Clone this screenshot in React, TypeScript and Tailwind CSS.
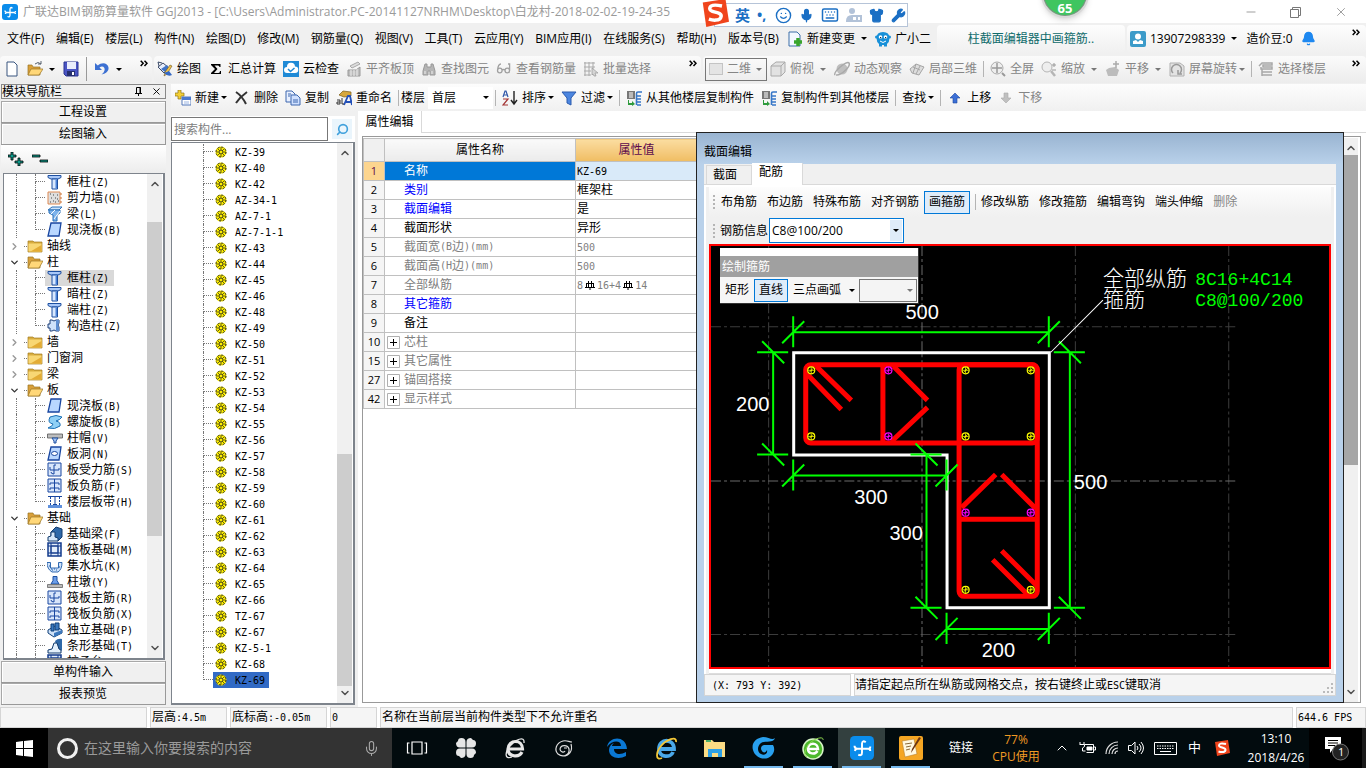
import React from 'react';
import { Smile, Mic, Keyboard, Shirt, Wrench, Bell, ChevronUp, ChevronDown, ChevronRight, Minus, X, Search } from 'lucide-react';

const dash = 'border-dotted border-[#777]';

const Caret = ({ className = 'text-black' }: { className?: string }) => (
  <svg width="6" height="3" viewBox="0 0 6 3" className={`shrink-0 ${className}`}>
    <path d="M0 0h6L3 3z" fill="currentColor" />
  </svg>
);

const Sep = () => <span className="-mx-px h-4 w-px shrink-0 bg-[#b4b4b4]" />;

const More = () => (
  <svg width="8" height="7" viewBox="0 0 8 7" fill="none" stroke="#000" strokeWidth="1.5">
    <path d="M.7.7 3.2 3.3.7 6M4.5.7 7 3.3 4.5 6" />
  </svg>
);

// Latin runs are set smaller so that they keep the half-width pitch of the CJK glyphs
const Mixed = ({ text }: { text: string }) => (
  <>
    {text.split(/([\x20-\x7e]+)/).map((part, i) =>
      /^[\x20-\x7e]+$/.test(part) ? (
        <span key={i} className="font-['DejaVu_Sans_Mono',monospace] text-[10px] whitespace-pre">{part}</span>
      ) : (
        <span key={i}>{part}</span>
      )
    )}
  </>
);

const shapes: Record<string, React.ReactNode> = {
  file: <path d="M3 1h7l3 3v11H3z" fill="#fff" stroke="#39557f" />,
  open: (
    <>
      <path d="M1 4h4l1 2h7v8H1z" fill="#d9a03a" stroke="#9a7424" strokeWidth=".7" />
      <path d="M4 8h12l-4 6H1z" fill="#ffd778" stroke="#9a7424" strokeWidth=".7" />
      <path d="M8 3q3-3 6 0m0-3v3h-3" fill="none" stroke="#5a6570" />
    </>
  ),
  openFolder: (
    <>
      <path d="M1 3h5l1 2h6v9H1z" fill="#d9a03a" stroke="#9a7424" strokeWidth=".7" />
      <path d="M4 7h12l-4 7H1z" fill="#ffd778" stroke="#9a7424" strokeWidth=".7" />
    </>
  ),
  save: (
    <>
      <path d="M1 1h14v14H3l-2-2z" fill="#4a55c4" stroke="#2b3592" />
      <path d="M4 1h9v7H4z" fill="#e9edfb" />
      <path d="M4 10h8v5H4z" fill="#26306f" />
      <path d="M9 11h2v3H9z" fill="#fff" />
    </>
  ),
  undo: <path d="M1 2v7h7L5.500 6.500c3-2.500 6 0 5 3-.5 2-2 3-3 4 5-1 7.500-4 7-7C14 2 8 .5 3.800 4.500z" fill="#3c70d2" />,
  draw: (
    <>
      <path d="m1 6 5-4 6 5-5 5z" fill="#e8eefc" stroke="#3b4a68" />
      <path d="M2 5 1 1l4 1" fill="none" stroke="#3b4a68" />
      <path d="m4 8 6-4 3 4-5 3z" fill="#3f73c8" />
      <path d="m15 5-5 8-3 2 1-4 5-7z" fill="#f0c24a" stroke="#6b5526" strokeWidth=".6" />
      <path d="M7 12q4 4 8 2l-3-4z" fill="#3569c4" />
    </>
  ),
  sigma: <path d="M3 3h9.500v3h-1Q11.300 4.500 10 4.500H6.500L9.500 8 6 12h4.500q1.500 0 1.500-2h1v3H3v-1l4-4-4-4z" fill="#000" />,
  cloud: (
    <>
      <path d="M0 0h16v16H0z" fill="#1f8ad6" />
      <path d="M4 12a3 3 0 0 1 0-6 4 4 0 0 1 8-.5 3.200 3.200 0 0 1 0 6.500z" fill="#fff" />
      <path d="m5 8 2.500 2.500L11.500 7" fill="none" stroke="#1f8ad6" strokeWidth="1.500" />
    </>
  ),
  level: (
    <>
      <path d="M2 9h8l4-3v9H2z" fill="#bdbdbd" stroke="#999" />
      <path d="m4 5 8-4 2 2-8 4z" fill="#ddd" stroke="#a8a8a8" />
      <path d="M5 9v6M8 9v6M11 8v7" stroke="#eee" />
    </>
  ),
  binoc: (
    <>
      <path d="M4 3h2v3h4V3h2l2 7v4H9v-4H7v4H2v-4z" fill="#b5b5b5" stroke="#999" />
      <path d="M4 10v3m7-3v3" stroke="#eee" />
    </>
  ),
  glasses: <path d="M5 3Q2 3 1.500 9.500a2.300 2.300 0 1 0 4.600 0 2.300 2.300 0 0 0-4.600 0M6 9q1.500-1 3 0m0 .5a2.300 2.300 0 1 0 4.600 0 2.300 2.300 0 0 0-4.600 0m4.600 0V3H12" fill="none" stroke="#a0a0a0" strokeWidth="1.300" />,
  batch: (
    <>
      <path d="M1 2h11M1 6h11M1 10h7M1 14h7M2 1v14M6 1v14M10 1v8" stroke="#aaa" fill="none" />
      <path d="m9 7 6 5-3 0 1 3-2 0-1-2-1 1z" fill="#d5d5d5" stroke="#999" strokeWidth=".7" />
    </>
  ),
  cube: (
    <>
      <path d="m1 5 5-4h9v10l-4 4H1z" fill="#e2e2e2" stroke="#aaa" />
      <path d="M1 5h10v10M11 5l4-4" fill="none" stroke="#aaa" />
    </>
  ),
  planet: (
    <>
      <circle cx="8" cy="8" r="5.500" fill="#bfbfbf" />
      <path d="M1 14C-1 11 13-1 15 2s-8 13-13 12" fill="none" stroke="#a9a9a9" strokeWidth="1.500" />
    </>
  ),
  local: (
    <>
      <path d="m1 8 6-5 8 3-5 8-7-2z" fill="#ddd" stroke="#a5a5a5" />
      <path d="m4 6 7 3M7 3l-3 9M11 5l-4 8" stroke="#a5a5a5" fill="none" />
    </>
  ),
  full: (
    <>
      <circle cx="7" cy="7" r="6" fill="#eee" stroke="#aaa" />
      <path d="M7 2v10M2 7h10" stroke="#999" strokeWidth="1.500" />
      <path d="m12 12 3 3" stroke="#999" strokeWidth="2" />
    </>
  ),
  zoom: (
    <>
      <circle cx="6" cy="6" r="5" fill="#eee" stroke="#b5b5b5" />
      <path d="m10 10 4 5" stroke="#b5b5b5" strokeWidth="2.500" />
      <path d="M13 2v4M11 4h4M11 9h4" stroke="#999" />
    </>
  ),
  pan: (
    <>
      <path d="M3 15 1 9l3-2 6-1 4 3-2 6z" fill="#bcbcbc" />
      <path d="M11 0v7M8 3h6" stroke="#aaa" strokeWidth="1.500" />
    </>
  ),
  rotate: (
    <>
      <path d="M1 2h10l4 3v10H1z" fill="#e3e3e3" stroke="#b0b0b0" />
      <path d="M4 12a5 5 0 1 1 7 0M9 9v4h4" fill="none" stroke="#999" strokeWidth="1.500" />
    </>
  ),
  floors: <path d="m1 5 3-3h10v2H5v2h9v2H3V6M4 11h10M4 14h10M4 8v7" fill="none" stroke="#a8a8a8" strokeWidth="1.500" />,
  add: (
    <>
      <path d="M3 0h3v3h3v3H6v3H3V6H0V3h3z" fill="#f3cf36" stroke="#8d7418" strokeWidth=".7" />
      <path d="M7 7h9v8H7z" fill="#fff" stroke="#5578b8" />
      <path d="M7 7h9v3H7z" fill="#4a79cf" />
      <path d="M9 12h5M9 14h5" stroke="#9db6e2" />
    </>
  ),
  del: <path d="M2 2q6 4 10 12M13 2Q6 7 2 13" stroke="#333" strokeWidth="2" fill="none" />,
  copy: (
    <>
      <path d="M1 1h6l3 3v8H1z" fill="#e8f0ff" stroke="#3d66ae" />
      <path d="M6 5h6l3 3v7H6z" fill="#cfe0ff" stroke="#3d66ae" />
      <path d="M8 10h5M8 12h5M3 4h3M3 6h2" stroke="#3d66ae" />
    </>
  ),
  rename: (
    <>
      <path d="m3 5 4-4 8 1v4l-7 1z" fill="#d6a73c" stroke="#775a17" strokeWidth=".7" />
      <path d="m8 15 4-9h2l2 9m-6-3h5" fill="none" stroke="#2350b8" strokeWidth="1.800" />
      <path d="M1 10h3v4H1v-2h3M6 8v6h2" fill="none" stroke="#333" />
    </>
  ),
  sort: (
    <>
      <path d="m1 7 2-6h1l2 6M2 5h3" fill="none" stroke="#2d55a8" strokeWidth="1.200" />
      <path d="M1 9h5l-5 6h5" fill="none" stroke="#a33535" strokeWidth="1.200" />
      <path d="M12 1v12m-3-3 3 4 3-4" fill="none" stroke="#222" strokeWidth="1.400" />
    </>
  ),
  filter: <path d="M1 2h14l-5 6v7l-4-2V8z" fill="#4c86e0" stroke="#2b5bad" />,
  floorCopy: (
    <>
      <path d="M1 1h8v8H1z" fill="#777" />
      <path d="M3 3h4M3 5h4M3 7h4" stroke="#fff" />
      <path d="M16 2h-4q-1.500 0-1.500 1.500V15M11 6h4M11 9h4M11 12h4M11 15h4" stroke="#3777c8" fill="none" strokeWidth="1.600" />
      <path d="M3 10v3h3v-2l3 3-3 2v-1H2v-5z" fill="#2d9a3c" />
    </>
  ),
  up: <path d="m8 3 5 5h-3v5H6V8H3z" fill="#3c6fd6" stroke="#1d46a0" strokeWidth=".6" />,
  down: <path d="m8 13 5-5h-3V3H6v5H3z" fill="#c0c0c0" stroke="#aaa" strokeWidth=".6" />,
  note: (
    <>
      <path d="M2 1h8l3 3v11H2z" fill="#f3f8ff" stroke="#3d6fa8" />
      <path d="M11 7v8M7 11h8" stroke="#39a52c" strokeWidth="3.500" />
    </>
  ),
  robot: (
    <>
      <path d="M8 1q6.500 0 6.500 6 0 4-2.500 6v2.500H9V14H7v1.500H4V13q-2.500-2-2.500-6 0-6 6.500-6" fill="#1890d8" />
      <circle cx="1.500" cy="6" r="1.500" fill="#1890d8" />
      <circle cx="14.500" cy="6" r="1.500" fill="#1890d8" />
      <circle cx="5.500" cy="6" r="1.800" fill="#fff" />
      <circle cx="10.500" cy="6" r="1.800" fill="#fff" />
      <path d="M5 6h1.200v1.200H5zM10 6h1.200v1.200H10z" fill="#1a2c40" />
      <path d="M5 10q3 3 6 0" stroke="#fff" fill="none" />
    </>
  ),
  user: (
    <>
      <rect width="16" height="16" rx="2" fill="#3c9bc9" />
      <circle cx="8" cy="5.500" r="3" fill="#fff" />
      <path d="M3 13V10l3-1 2 2 2-2 3 1v3z" fill="#fff" />
    </>
  ),
  logo: (
    <>
      <rect width="16" height="16" rx="3" fill="#0a8ceb" />
      <path d="M10.500 4.200Q8.300 2.500 8 5v6q0 2.500-2.500 1.500M3 6.500q0 2 2 2h7.500q1 0 1-1.500M3.300 10q.2-1.500 1.700-1.500M12 8.500q1.500 0 1.500 1.500" fill="none" stroke="#fff" strokeWidth="1.300" />
    </>
  ),
  folder: (
    <>
      <path d="M1 3h5l1 1h8v10H1z" fill="#d8ad3f" stroke="#a37d21" strokeWidth=".7" />
      <path d="M1.500 5.500h13v8h-13z" fill="#f8d774" />
      <path d="M14.500 7v6.500h-11z" fill="#e3ac35" />
    </>
  ),
  column: (
    <>
      <path d="M1 1.500h13v2L11 5H4L1 3.500z" fill="#a9c8f8" stroke="#1d4fa0" />
      <path d="M5 5h5.500v10H5z" fill="#d8e8ff" stroke="#1d4fa0" />
      <path d="M8.500 5.500H10v9H8.500z" fill="#4a82d8" />
    </>
  ),
  wall: (
    <>
      <path d="M1 2h12v12H1z" fill="#dedede" stroke="#dd8a55" />
      <path d="M3 4h1M6 5h1M4 8h1M8 8h1M10 5h1M6 11h1M11 11h1M3 12h1M10 9h1M8 12h1" stroke="#444" />
      <path d="M13 4h2M13 8h2M13 12h2" stroke="#c9712f" />
    </>
  ),
  beam: (
    <>
      <path d="m1 4 4-3h10l-3 3z" fill="#cce2fb" stroke="#2b71b8" />
      <path d="M2 4h11v3l-3 2v6H6V9L2 7z" fill="#7db3ec" stroke="#2b71b8" />
      <path d="m4 8 4-4m-1 9 6-8" stroke="#fff" />
    </>
  ),
  slab: <path d="M4 1h10l-2 13H1z" fill="#b9d7ff" stroke="#1846a0" strokeWidth="1.300" />,
  spiral: <path d="M3 3q6-3 12 0-2 3-6 4 5 1 4 5-5 4-12 2 5-2 5-4-6-1-3-7" fill="#8fd0f6" stroke="#1a6fb5" />,
  cap: (
    <>
      <path d="M.5 4h15v4H.5z" fill="#bdbdbd" stroke="#555" strokeWidth=".8" />
      <path d="M5 8h6l-2 3v2H7v-2z" fill="#a6c6f6" stroke="#1d4fa0" />
    </>
  ),
  hole: (
    <>
      <path d="M4 1h10l-2 13H1z" fill="#b9d7ff" stroke="#1846a0" strokeWidth="1.300" />
      <ellipse cx="7.500" cy="7.500" rx="3" ry="2" fill="#fff" stroke="#1846a0" />
    </>
  ),
  rebar: (
    <>
      <path d="M1 1h13v13H1z" fill="#d8e6fb" stroke="#1846a0" />
      <path d="M3 5v3h9V6M9 3H7v9q-3 0-3-2" fill="none" stroke="#1846a0" />
    </>
  ),
  rebar2: (
    <>
      <path d="M1 1h13v13H1z" fill="#d8e6fb" stroke="#1846a0" />
      <path d="M7.500 1v13M3 7V5h9v2M3 12v-2h9v2" fill="none" stroke="#1846a0" />
    </>
  ),
  strip: (
    <>
      <path d="M1 2.500h14" stroke="#1846a0" />
      <path d="M1 11h14v3H1z" fill="#5f90dc" />
      <path d="M3.500 3v8M12.500 3v8" stroke="#1846a0" strokeDasharray="2 1" />
      <path d="M8 3v8M6 10.500h4" stroke="#1846a0" />
    </>
  ),
  footBeam: (
    <>
      <path d="M4 11V6l5-5 6 2v8l-4 4z" fill="#2e68a8" stroke="#123a6c" />
      <path d="M1 15v-4l3-1V6h4v5l3 1v3z" fill="#d5e6f8" stroke="#123a6c" />
    </>
  ),
  raft: (
    <>
      <path d="M1 1h13v13H1z" fill="#e2edfb" stroke="#123a8c" strokeWidth="1.500" />
      <path d="M4 4h7v7H4zM4 1v13M11 1v13M1 4h13M1 11h13" fill="none" stroke="#123a8c" />
    </>
  ),
  pit: (
    <>
      <path d="M0 4.500h3.500V10h8V4.500H15q0 7-4 9.500H5Q0 11 0 4.500" fill="#cfe2fa" stroke="#1d5aa8" strokeWidth=".9" />
      <path d="M2 8h1M5 12h1M9 12h1M12 9h1M7 11h1M4 11h1" stroke="#1d5aa8" />
    </>
  ),
  pier: (
    <>
      <path d="M6 2.500h4v4l2 3.500H4l2-3.500z" fill="#6b9de8" stroke="#1d4fa0" />
      <path d="M.5 10.500h15v3H.5z" fill="#bbb" stroke="#666" strokeWidth=".8" />
    </>
  ),
  iso: (
    <>
      <path d="m1 8 7-4 7 4v3l-8 4-6-4z" fill="#cfe2f8" stroke="#0f3f78" />
      <path d="M4 2h3v7H4zM8 1h4v7H8z" fill="#3b78be" stroke="#0f3f78" />
      <path d="M7 11v4l8-4V8z" fill="#3b78be" />
    </>
  ),
  stripFoot: (
    <>
      <path d="M8 3q3-3 7-2v11l-3 3z" fill="#2e68a8" />
      <path d="M1 15v-3l4-1 2-6h3l2 6 2 1v3z" fill="#e3effb" stroke="#123a6c" />
    </>
  ),
  joint: (
    <>
      <path d="M5 2q2 2 4 0h3v3q-2 2 0 4v4H9q-2-2-4 0H3v-3H1V6h2V2z" fill="#cfe2fa" stroke="#1d3f78" />
      <path d="M9 2h3v3q-2 2 0 4v4H9z" fill="#5f8fd2" />
    </>
  ),
  gear: (
    <>
      <circle cx="8" cy="8" r="5.500" fill="#fff000" />
      <g stroke="#222" fill="none">
        <circle cx="8" cy="8" r="5" strokeWidth="1" strokeDasharray="2 1.900" />
        <path d="M8 3v2.500M8 10.500V13M3 8h2.500M10.500 8H13M4.500 4.500l2 2m3 3 2 2m0-7-2 2m-3 3-2 2" strokeWidth=".7" />
        <circle cx="8" cy="8" r="2" strokeWidth=".9" />
      </g>
    </>
  ),
  sogou: (
    <>
      <path d="m1 2 13-2 2 13-13 3z" fill="#f0441c" />
      <path d="M12 4Q5 2.500 5 5.500C5 8 12 7 11.500 10 11 13 6 12 4.500 11.500" fill="none" stroke="#fff" strokeWidth="2" />
    </>
  ),
};

const Icon = ({ name, size = 16 }: { name: string; size?: number }) => (
  <svg width={size} height={size} viewBox="0 0 16 16" className="shrink-0">
    {shapes[name]}
  </svg>
);

interface ToolProps {
  icon?: string;
  label?: string;
  caret?: 'near' | 'far';
  off?: boolean;
}

const Tool = ({ icon, label, caret, off }: ToolProps) => (
  <button type="button" aria-label={label ?? icon} className={`flex shrink-0 items-center gap-1 whitespace-nowrap ${off ? 'text-[#858585]' : 'text-black'}`}>
    {icon && <Icon name={icon} />}
    {label && <span>{label}</span>}
    {caret && <Caret className={`${caret === 'far' ? 'mr-px ml-0.5' : '-ml-0.5'} ${off ? 'text-[#777]' : 'text-black'}`} />}
  </button>
);

const menus = ['文件(F)', '编辑(E)', '楼层(L)', '构件(N)', '绘图(D)', '修改(M)', '钢筋量(Q)', '视图(V)', '工具(T)', '云应用(Y)', 'BIM应用(I)', '在线服务(S)', '帮助(H)', '版本号(B)'];

const tree: { icon: string; label: string; group?: 'open' | 'closed'; last?: boolean; active?: boolean }[] = [
  { icon: 'column', label: '框柱(Z)' },
  { icon: 'wall', label: '剪力墙(Q)' },
  { icon: 'beam', label: '梁(L)' },
  { icon: 'slab', label: '现浇板(B)', last: true },
  { icon: 'folder', label: '轴线', group: 'closed' },
  { icon: 'openFolder', label: '柱', group: 'open' },
  { icon: 'column', label: '框柱(Z)', active: true },
  { icon: 'column', label: '暗柱(Z)' },
  { icon: 'column', label: '端柱(Z)' },
  { icon: 'joint', label: '构造柱(Z)', last: true },
  { icon: 'folder', label: '墙', group: 'closed' },
  { icon: 'folder', label: '门窗洞', group: 'closed' },
  { icon: 'folder', label: '梁', group: 'closed' },
  { icon: 'openFolder', label: '板', group: 'open' },
  { icon: 'slab', label: '现浇板(B)' },
  { icon: 'spiral', label: '螺旋板(B)' },
  { icon: 'cap', label: '柱帽(V)' },
  { icon: 'hole', label: '板洞(N)' },
  { icon: 'rebar', label: '板受力筋(S)' },
  { icon: 'rebar2', label: '板负筋(F)' },
  { icon: 'strip', label: '楼层板带(H)', last: true },
  { icon: 'openFolder', label: '基础', group: 'open' },
  { icon: 'footBeam', label: '基础梁(F)' },
  { icon: 'raft', label: '筏板基础(M)' },
  { icon: 'pit', label: '集水坑(K)' },
  { icon: 'pier', label: '柱墩(Y)' },
  { icon: 'rebar', label: '筏板主筋(R)' },
  { icon: 'rebar2', label: '筏板负筋(X)' },
  { icon: 'iso', label: '独立基础(P)' },
  { icon: 'stripFoot', label: '条形基础(T)' },
  { icon: 'raft', label: '桩承台(V)' },
];

const members = [
  'KZ-39', 'KZ-40', 'KZ-42', 'AZ-34-1', 'AZ-7-1', 'AZ-7-1-1', 'KZ-43', 'KZ-44', 'KZ-45', 'KZ-46', 'KZ-48', 'KZ-49',
  'KZ-50', 'KZ-51', 'KZ-52', 'KZ-53', 'KZ-54', 'KZ-55', 'KZ-56', 'KZ-57', 'KZ-58', 'KZ-59', 'KZ-60', 'KZ-61',
  'KZ-62', 'KZ-63', 'KZ-64', 'KZ-65', 'KZ-66', 'TZ-67', 'KZ-67', 'KZ-5-1', 'KZ-68', 'KZ-69',
];

const Rebar = () => (
  <svg width="10" height="10" viewBox="0 0 10 10" className="mx-0.5 inline-block align-middle" fill="none" stroke="#000">
    <path d="M3.500 1v7M6.500 1v7M0 7.500h10M1 3.500h8M1.500 3.500v4M8.500 3.500v4M5 7v3" />
  </svg>
);

const props: { n: number; name: string; value?: React.ReactNode; color: string; fold?: boolean }[] = [
  { n: 1, name: '名称', value: <Mixed text="KZ-69" />, color: 'text-white' },
  { n: 2, name: '类别', value: '框架柱', color: 'text-[#0000ff]' },
  { n: 3, name: '截面编辑', value: '是', color: 'text-[#0000ff]' },
  { n: 4, name: '截面形状', value: '异形', color: 'text-black' },
  { n: 5, name: '截面宽(B边)(mm)', value: <Mixed text="500" />, color: 'text-[#808080]' },
  { n: 6, name: '截面高(H边)(mm)', value: <Mixed text="500" />, color: 'text-[#808080]' },
  { n: 7, name: '全部纵筋', value: <><Mixed text="8" /><Rebar /><Mixed text="16+4" /><Rebar /><Mixed text="14" /></>, color: 'text-[#808080]' },
  { n: 8, name: '其它箍筋', color: 'text-[#0000ff]' },
  { n: 9, name: '备注', color: 'text-black' },
  { n: 10, name: '芯柱', color: 'text-[#808080]', fold: true },
  { n: 15, name: '其它属性', color: 'text-[#808080]', fold: true },
  { n: 27, name: '锚固搭接', color: 'text-[#808080]', fold: true },
  { n: 42, name: '显示样式', color: 'text-[#808080]', fold: true },
];

const ScrollBar = ({ before, thumb, after, tone = 'bg-[#cdcdcd]' }: { before: string; thumb: string; after: string; tone?: string }) => (
  <div className="mr-px flex w-[15px] shrink-0 flex-col items-center bg-[#f0f0f0] text-[#505050]">
    <ChevronUp size={12} strokeWidth={3} className="mt-1 mb-px shrink-0" />
    <div className={before} />
    <div className={`w-full ${thumb} ${tone}`} />
    <div className={after} />
    <ChevronDown size={12} strokeWidth={3} className="mt-px mb-1 shrink-0" />
  </div>
);

const TitleBar = () => (
  <header className="relative flex h-[23px] shrink-0 items-center bg-white pl-0.5">
    <Icon name="logo" />
    <span className="ml-[5px] whitespace-nowrap text-[#9a9a9a]">
      广联达BIM钢筋算量软件 GGJ2013 - [C:\Users\Administrator.PC-20141127NRHM\Desktop\白龙村-2018-02-02-19-24-35
    </span>
    <div className="absolute right-[18px] flex items-center gap-[31px] text-[#777]">
      <button type="button" aria-label="最小化"><Minus size={14} strokeWidth={1.2} /></button>
      <button type="button" aria-label="还原">
        <svg width="14" height="12" viewBox="0 0 14 12" fill="none" stroke="#777"><path d="M1.500 3.500h8v8h-8zM3.500 3V1.500h8v8H10" /></svg>
      </button>
      <button type="button" aria-label="关闭"><X size={14} strokeWidth={1.2} /></button>
    </div>
    <div className="absolute top-[3px] left-[714px] z-10 flex h-[24px] w-[194px] items-center gap-[7px] border border-[#b6c4d8] bg-white pl-5 text-[#1b6fc4]">
      <span className="text-[15px] leading-4 font-bold">英</span>
      <span className="w-[11px] text-sm leading-4 font-bold">•,</span>
      <Smile size={17} />
      <Mic size={15} fill="currentColor" />
      <Keyboard size={18} />
      <svg width="16" height="14" viewBox="0 0 16 14" fill="#b2c2d8"><circle cx="6" cy="3" r="3" /><path d="M0 13q0-6 6-6h10v7H0z" /><path d="M7 9h3v3H7zM12 9h2v3h-2" fill="#fff" /></svg>
      <Shirt size={15} fill="currentColor" />
      <Wrench size={15} fill="currentColor" />
    </div>
    <div className="absolute -top-px left-[701px] z-20"><Icon name="sogou" size={28} /></div>
    <div className="absolute -top-[30px] left-[1041px] z-20 flex size-12 items-end justify-center rounded-full border-2 border-[#d8d8d8] bg-[#3fc560] pb-0.5 text-[13px] leading-3 font-bold text-white shadow-md ring-1 ring-[#888] ring-inset">
      65
    </div>
  </header>
);

const MenuBar = () => (
  <div className="flex h-[31px] shrink-0 items-center bg-[#f0f0f0]">
    <nav className="flex w-[787px] shrink-0 items-center justify-between pr-2 pl-[7px] whitespace-nowrap">
      {menus.map((m) => (
        <button key={m} type="button">{m}</button>
      ))}
    </nav>
    <div className="flex w-[150px] shrink-0 items-center gap-[7px]">
      <Tool icon="note" label="新建变更" caret="far" />
      <Tool icon="robot" label="广小二" />
    </div>
    <div className="flex h-7 w-[188px] shrink-0 items-center justify-center rounded bg-linear-to-b from-[#fdfdfd] to-[#f0f0f0]">
      <a href="#help" className="text-[#0f6b6b]">柱截面编辑器中画箍筋..</a>
    </div>
    <div className="ml-0.5 flex h-7 flex-1 items-center rounded bg-linear-to-b from-[#fdfdfd] to-[#f0f0f0] pr-1.5 pl-[3px]">
      <Tool icon="user" label="13907298339" caret="far" />
      <span className="ml-2 whitespace-nowrap">造价豆:0</span>
      <Bell size={15} fill="#1e88f0" className="ml-2 text-[#1e88f0]" />
      <span className="mb-3 ml-auto"><More /></span>
    </div>
  </div>
);

const MainToolbar = () => (
  <div className="flex h-[30px] shrink-0 items-center bg-[#f0f0f0]">
    <div className="flex h-[27px] w-[152px] shrink-0 items-center gap-[7px] rounded bg-linear-to-b from-[#fbfbfb] to-[#ececec] pr-1 pl-1">
      <Tool icon="file" />
      <Tool icon="open" caret="far" />
      <Tool icon="save" />
      <span className="h-6 w-px bg-[#999]" />
      <Tool icon="undo" caret="far" />
      <span className="mb-3 ml-auto"><More /></span>
    </div>
    <div className="ml-0.5 flex h-[27px] w-[547px] shrink-0 items-center gap-[7px] rounded bg-linear-to-b from-[#fbfbfb] to-[#ececec] pl-[3px]">
      <Tool icon="draw" label="绘图" />
      <Tool icon="sigma" label="汇总计算" />
      <Tool icon="cloud" label="云检查" />
      <Tool icon="level" label="平齐板顶" off />
      <Tool icon="binoc" label="查找图元" off />
      <Tool icon="glasses" label="查看钢筋量" off />
      <Tool icon="batch" label="批量选择" off />
      <span className="mr-1 mb-3 ml-auto"><More /></span>
    </div>
    <div className="ml-0.5 flex h-[27px] flex-1 items-center gap-[7px] rounded bg-linear-to-b from-[#fbfbfb] to-[#ececec] pr-1.5 pl-0.5">
      <div className="-mr-1 flex h-[23px] w-[62px] shrink-0 items-center border border-[#777] pr-1 pl-[3px]">
        <span className="h-3 w-3.5 shrink-0 border border-[#c4c4c4] bg-[#e4e4e4]" />
        <select aria-label="视图模式" className="w-full appearance-none bg-transparent pl-1 text-[#858585] outline-none">
          <option>二维</option>
        </select>
        <Caret className="text-[#777]" />
      </div>
      <Tool icon="cube" label="俯视" caret="far" off />
      <Tool icon="planet" label="动态观察" off />
      <Tool icon="local" label="局部三维" off />
      <Sep />
      <Tool icon="full" label="全屏" off />
      <Tool icon="zoom" label="缩放" caret="far" off />
      <Tool icon="pan" label="平移" caret="far" off />
      <Tool icon="rotate" label="屏幕旋转" caret="near" off />
      <Sep />
      <Tool icon="floors" label="选择楼层" off />
      <span className="mb-3 ml-auto"><More /></span>
    </div>
  </div>
);

const SideButton = ({ label }: { label: string }) => (
  <button type="button" className="h-[22px] shrink-0 border-r border-b border-[#999] bg-[#f0f0f0] shadow-[inset_1px_1px_#a8a8a8,inset_2px_2px_#fff]">{label}</button>
);

const Sidebar = () => (
  <aside className="flex w-[168px] shrink-0 flex-col pr-[2px] pb-[2px] pl-px">
    <div className="flex h-[15px] shrink-0 items-center border border-[#888] leading-[13px]">
      <span>模块导航栏</span>
      <svg width="9" height="9" viewBox="0 0 9 9" className="mr-2 ml-auto" fill="none" stroke="#000"><path d="M2.500 6V.5h4V6M6 0v6M1 6.500h7M4.500 6v3" /></svg>
      <X size={11} strokeWidth={2} className="mr-[3px]" />
    </div>
    <div className="h-0.5 shrink-0" />
    <SideButton label="工程设置" />
    <SideButton label="绘图输入" />
    <div className="flex h-7 shrink-0 items-center gap-2 bg-linear-to-b from-white to-[#ececec] pl-[7px]">
      <svg width="16" height="14" viewBox="0 0 16 14" fill="#0f9a8a" stroke="#000" strokeWidth=".8"><path d="M3 0h2v3h3v2H5v3H3V5H0V3h3zM10 6h2v3h3v2h-3v3h-2v-3H7V9h3z" /></svg>
      <svg width="16" height="14" viewBox="0 0 16 14" fill="#0f9a8a" stroke="#000" strokeWidth=".8"><path d="M0 3h8v2H0zM8 8h8v2H8z" /></svg>
    </div>
    <div className="mr-px ml-0.5 flex min-h-0 flex-1 border border-r-2 border-b-2 border-[#7e848c] bg-white">
      <ul className="min-w-0 flex-1 overflow-hidden leading-4 whitespace-nowrap">
        {tree.map((t, i) =>
          t.group ? (
            <li key={i} className="flex h-4 items-center pl-[5px]">
              {t.group === 'open' ? <ChevronDown size={11} strokeWidth={3} className="text-[#333]" /> : <ChevronRight size={11} strokeWidth={3} className="text-[#999]" />}
              <span className={`ml-1 w-[3px] border-b ${dash}`} />
              <Icon name={t.icon} />
              <span className="ml-1"><Mixed text={t.label} /></span>
            </li>
          ) : (
            <li key={i} className="flex h-4 pl-3">
              <span className={`w-[19px] shrink-0 border-l ${dash}`} />
              <span className={`h-2 w-2.5 shrink-0 border-b border-l ${dash}`} />
              {!t.last && <span className={`mt-2 mr-[9px] -ml-2.5 h-2 w-px border-l ${dash}`} />}
              <span className={`flex pr-[5px] pl-0.5 ${t.active ? 'bg-[#d9d9d9]' : ''}`}>
                <Icon name={t.icon} />
                <span className="ml-1"><Mixed text={t.label} /></span>
              </span>
            </li>
          )
        )}
      </ul>
      <ScrollBar before="basis-[31px] shrink" thumb="basis-[314px] shrink" after="flex-1" />
    </div>
    <div className="h-px shrink-0" />
    <SideButton label="单构件输入" />
    <SideButton label="报表预览" />
  </aside>
);

const MemberToolbar = () => (
  <div className="flex h-[27px] shrink-0 items-center gap-[7px] bg-linear-to-b from-[#fdfdfd] to-[#f0f0f0] pl-1">
    <Tool icon="add" label="新建" caret="near" />
    <Tool icon="del" label="删除" />
    <Tool icon="copy" label="复制" />
    <Tool icon="rename" label="重命名" />
    <Sep />
    <label htmlFor="floor" className="-ml-1">楼层</label>
    <div className="-mx-1 flex w-[65px] items-center bg-white pr-1">
      <select id="floor" className="h-[22px] w-full appearance-none pl-1 outline-none">
        <option>首层</option>
      </select>
      <Caret />
    </div>
    <Sep />
    <Tool icon="sort" label="排序" caret="near" />
    <Tool icon="filter" label="过滤" caret="near" />
    <Sep />
    <Tool icon="floorCopy" label="从其他楼层复制构件" />
    <Tool icon="floorCopy" label="复制构件到其他楼层" />
    <Sep />
    <Tool label="查找" caret="near" />
    <Sep />
    <Tool icon="up" label="上移" />
    <Tool icon="down" label="下移" off />
  </div>
);

const MemberList = () => (
  <section className="flex w-[184px] shrink-0 flex-col pb-[2px]">
    <div className="mt-[5px] flex h-[26px] shrink-0 items-center bg-white">
      <input aria-label="搜索构件" placeholder="搜索构件..." className="h-6 w-[157px] border border-[#777] bg-white px-0.5 outline-none placeholder:text-[#808080]" />
      <button type="button" aria-label="搜索" className="ml-1 flex size-5 items-center justify-center bg-[#eaf5fc] text-[#3fa0dc]">
        <Search size={13} strokeWidth={3} className="-scale-x-100" />
      </button>
    </div>
    <div className="flex min-h-0 flex-1 border border-r-2 border-b-2 border-[#7e848c] bg-white">
      <ul className="flex-1 overflow-hidden pt-px leading-4">
        {members.map((m, i) => {
          const last = i === members.length - 1;
          return (
            <li key={m} className="flex h-4 pl-[31px]">
              <span className={`h-2 w-2.5 border-b border-l ${dash}`} />
              {!last && <span className={`mt-2 mr-[9px] -ml-2.5 h-2 w-px border-l ${dash}`} />}
              <span className={`flex items-center pr-1 ${last ? 'bg-[#316ac5]' : ''}`}>
                <Icon name="gear" />
                <span className="ml-[6px]"><Mixed text={m} /></span>
              </span>
            </li>
          );
        })}
      </ul>
      <ScrollBar before="basis-[294px] shrink" thumb="basis-[232px] shrink" after="flex-1" />
    </div>
  </section>
);

const PropertyTable = () => (
  <table className="w-[335px] table-fixed border-collapse self-start">
    <thead>
      <tr className="h-[23px]">
        <th className="w-[21px] border border-[#c0c0c0] bg-[#f0f0f0]" />
        <th className="w-[191px] border border-[#c0c0c0] bg-linear-to-b from-[#fafafa] to-[#ebebeb] font-normal">属性名称</th>
        <th className="border border-[#c0c0c0] bg-linear-to-b from-[#fbdda0] to-[#f0bd62] font-normal text-[#5c0a4c]">属性值</th>
      </tr>
    </thead>
    <tbody>
      {props.map((p) => (
        <tr key={p.n} className="h-[19px] leading-4">
          <td className={`border border-[#c0c0c0] p-0 text-center text-[11px] ${p.n === 1 ? 'bg-[#fcd58f] text-[#5c0a4c]' : 'bg-[#f5f5f5]'}`}>{p.n}</td>
          <td className={`border border-[#c0c0c0] p-0 ${p.color} ${p.n === 1 ? 'bg-[#0078d7]' : ''}`}>
            <span className="flex items-center">
              <span className="flex w-[19px] pl-[2px]">
                {p.fold && (
                  <svg width="13" height="13" viewBox="0 0 13 13" fill="none"><path d="M.5.5h12v12H.5z" stroke="#b0b0b0" /><path d="M3 6.500h7M6.500 3v7" stroke="#000" /></svg>
                )}
              </span>
              <Mixed text={p.name} />
            </span>
          </td>
          <td className={`border border-[#c0c0c0] px-px py-0 whitespace-nowrap ${p.n === 1 ? 'bg-[#d9eaf9]' : ''} ${p.n > 4 ? 'text-[#808080]' : ''}`}>{p.value}</td>
        </tr>
      ))}
    </tbody>
  </table>
);

const HDim = ({ x1, x2, y }: { x1: number; x2: number; y: number }) => (
  <path d={`M${x1} ${y}H${x2}${[x1, x2].map((x) => `M${x} ${y - 16}v31M${x - 11} ${y + 11}l22 -22`).join('')}`} />
);

const VDim = ({ x, y1, y2 }: { x: number; y1: number; y2: number }) => (
  <path d={`M${x} ${y1}V${y2}${[y1, y2].map((y) => `M${x - 16} ${y}h31M${x - 11} ${y - 11}l22 22`).join('')}`} />
);

const Bar = ({ x, y, color }: { x: number; y: number; color: string }) => (
  <g fill="none" stroke={color}>
    <circle cx={x} cy={y} r="3.500" fill="#000" strokeWidth="1.200" />
    <path d={`M${x - 3} ${y}h6M${x} ${y - 3}v6M${x - 2} ${y + 2}l4 -4`} strokeWidth=".8" />
  </g>
);

const SectionDrawing = () => (
  <svg viewBox="711 246 618 420" preserveAspectRatio="xMinYMin slice" className="block h-full w-full">
    <g stroke="#3c3c3c" strokeDasharray="10 3 3 3" fill="none">
      <path d="M768.500 246v420M1074.500 246v420M1227.500 246v420M711 326.500h524M711 633.500h524" />
      <path d="M921.500 246v420M711 480.500h524" stroke="#6a6a6a" />
    </g>
    <path d="M793.500 352.500h255V607h-102V454.500h-153z" fill="none" stroke="#fff" strokeWidth="3" />
    <g stroke="#f00" strokeWidth="5" fill="none">
      <rect x="805.500" y="364.500" width="231" height="78" rx="5" />
      <rect x="958.500" y="364.500" width="78" height="231" rx="5" />
      <path d="M882.500 364v78M960 518.500h75" />
      <path d="M816 366l35 34M807 374l34 35M893 366l34 34M891 441l36-34M961 507l34-33M1001 474l34 34M1001 550l35 35M992 559l35 35" />
    </g>
    {[[811, 370], [965, 370], [1030, 370], [811, 436], [965, 436], [1030, 436], [965, 589], [1030, 589]].map(([x, y]) => (
      <Bar key={`${x}-${y}`} x={x} y={y} color="#ffff00" />
    ))}
    {[[888, 370], [888, 436], [965, 512], [1030, 512]].map(([x, y]) => (
      <Bar key={`${x}-${y}`} x={x} y={y} color="#ff00ff" />
    ))}
    <g stroke="#0f0" strokeWidth="2" fill="none">
      <HDim x1={793} x2={1048} y={332} />
      <HDim x1={793} x2={946} y={475} />
      <HDim x1={946} x2={1048} y={628} />
      <VDim x={773} y1={352} y2={454} />
      <VDim x={926} y1={454} y2={607} />
      <VDim x={1069} y1={352} y2={607} />
    </g>
    <path d="M1050 352l52-52" stroke="#fff" />
    <g fill="#fff" fontSize="20" fontFamily="'Liberation Sans', sans-serif">
      <text x="905" y="319">500</text>
      <text x="736" y="411">200</text>
      <text x="854" y="503">300</text>
      <text x="889" y="539">300</text>
      <text x="981" y="656">200</text>
      <text x="1073" y="488">500</text>
    </g>
    <g fill="#fff" fontSize="21" fontWeight="300" fontFamily="'Noto Sans CJK SC', sans-serif">
      <text x="1102" y="286">全部纵筋</text>
      <text x="1102" y="307">箍筋</text>
    </g>
    <g fill="#0f0" fontSize="18" fontFamily="'Liberation Mono', monospace">
      <text x="1194" y="285">8C16+4C14</text>
      <text x="1194" y="306">C8@100/200</text>
    </g>
  </svg>
);

const Grip = () => <span className="mr-[5px] h-3.5 w-0.5 shrink-0 border-l-2 border-dotted border-[#b5b5b5]" />;

const SectionDialog = () => (
  <div role="dialog" aria-label="截面编辑" className="absolute top-[21px] right-[22px] bottom-1 left-[338px] z-10 flex flex-col border border-[#222] bg-[#b9d1ea] px-[7px] pb-[6px]">
    <div className="-mx-[7px] flex h-[31px] shrink-0 items-center bg-linear-to-b from-[#99b4d1] to-[#b9d1ea] px-[7px] pt-1.5">截面编辑</div>
    <div className="flex min-h-0 flex-1 flex-col bg-[#f0f0f0]">
      <div className="flex h-[21px] shrink-0 items-end border-b border-[#d9d9d9] pl-0.5">
        <button type="button" className="h-[19px] w-[46px] border border-b-0 border-[#d9d9d9] bg-[#f0f0f0] pr-2">截面</button>
        <button type="button" className="-mb-px h-[22px] w-[51px] border-r border-[#d9d9d9] bg-white pr-3 pb-1">配筋</button>
      </div>
      <div className="flex min-h-0 flex-1 flex-col border-x-2 border-t-2 border-white px-[3px]">
        <div className="flex h-[30px] shrink-0 items-center gap-[5px] bg-linear-to-b from-[#fdfdfd] to-[#f0f0f0] pl-1 whitespace-nowrap">
          <Grip />
          <button type="button" className="-ml-1 pr-[5px]">布角筋</button>
          <button type="button" className="pr-[5px]">布边筋</button>
          <button type="button" className="pr-[5px]">特殊布筋</button>
          <button type="button">对齐钢筋</button>
          <button type="button" className="h-[23px] w-[46px] border border-[#0078d7] bg-[#dfecf9]">画箍筋</button>
          <span className="h-4 w-px bg-[#b4b4b4]" />
          <button type="button" className="pr-[5px]">修改纵筋</button>
          <button type="button" className="pr-[5px]">修改箍筋</button>
          <button type="button" className="pr-[5px]">编辑弯钩</button>
          <button type="button" className="pr-[5px]">端头伸缩</button>
          <button type="button" className="text-[#858585]">删除</button>
        </div>
        <div className="flex h-[27px] shrink-0 items-center pl-1">
          <Grip />
          <label htmlFor="rebar" className="w-[49px] shrink-0 whitespace-nowrap">钢筋信息</label>
          <div className="flex h-[25px] w-[135px] border border-[#0078d7] bg-white">
            <select id="rebar" className="flex-1 appearance-none px-0.5 outline-none">
              <option>C8@100/200</option>
            </select>
            <span className="my-px mr-px flex w-3 items-center justify-center bg-[#dfecf9]"><Caret /></span>
          </div>
        </div>
        <div className="relative min-h-0 flex-1 border-2 border-[#f00] bg-black">
          <SectionDrawing />
          <div className="absolute top-[2px] left-[9px] flex w-[199px] flex-col border-r border-b border-[#333] bg-white pt-2 whitespace-nowrap">
            <div className="bg-[#a0a0a0] px-0.5 leading-[21px] text-white">绘制箍筋</div>
            <div className="flex h-[26px] items-center bg-[#f6f6f6] pr-px pl-[5px]">
              <button type="button">矩形</button>
              <button type="button" className="ml-[5px] h-[23px] w-[34px] border border-[#0078d7] bg-[#dfecf9]">直线</button>
              <button type="button" className="ml-[5px]">三点画弧</button>
              <span className="ml-2"><Caret /></span>
              <div className="ml-auto flex h-[23px] w-[58px] items-center border border-[#777] bg-[#f4f4f4] pr-[3px]">
                <select aria-label="弧线方式" className="w-full appearance-none outline-none"><option></option></select>
                <Caret className="text-[#777]" />
              </div>
            </div>
          </div>
        </div>
        <div className="h-[5px] shrink-0 border-b border-[#ddd] bg-white" />
      </div>
      <div className="flex h-[22px] shrink-0 gap-[3px] bg-white">
        <div className="w-[147px] border border-[#d5d5d5] bg-[#f5f5f5] pl-[7px] leading-[19px]"><Mixed text="(X: 793 Y: 392)" /></div>
        <div className="flex flex-1 justify-between border border-[#d5d5d5] bg-[#f5f5f5] leading-[19px]">
          <span><Mixed text="请指定起点所在纵筋或网格交点，按右键终止或ESC键取消" /></span>
          <svg width="12" height="12" viewBox="0 0 12 12" className="self-end" fill="#bbb"><path d="M8 0h2v2H8zM4 4h2v2H4zM8 4h2v2H8zM0 8h2v2H0zM4 8h2v2H4zM8 8h2v2H8z" /></svg>
        </div>
      </div>
    </div>
  </div>
);

const StatusBar = () => (
  <div className="flex h-[21px] shrink-0 gap-[3px] bg-white leading-[18px] whitespace-nowrap [&>div]:border [&>div]:border-[#d5d5d5] [&>div]:bg-[#f5f5f5] [&>div]:px-px">
    <div className="w-[147px]" />
    <div className="w-[77px]"><Mixed text="层高:4.5m" /></div>
    <div className="w-[97px]"><Mixed text="底标高:-0.05m" /></div>
    <div className="w-[47px]"><Mixed text="0" /></div>
    <div className="flex-1">名称在当前层当前构件类型下不允许重名</div>
    <div className="w-[70px]"><Mixed text="644.6 FPS" /></div>
  </div>
);

const apps: { name: string; on?: boolean; art: React.ReactNode }[] = [
  { name: '任务视图', art: <path d="M7 6h10v12H7zM4.500 7h-2v10h2M19.500 7h2v10h-2" fill="none" stroke="#fff" strokeWidth="1.200" /> },
  {
    name: '风车',
    art: (
      <g fill="#e6e6e6">
        <path d="M11.500 11.500H6q-4 0-4-4.500l2-2q0-3 3.500-3 4 0 4 4zM12.500 11.500V6q0-4 4.500-4l2 2q3 0 3 3.500 0 4-4 4zM12.500 12.500H18q4 0 4 4.500l-2 2q0 3-3.500 3-4 0-4-4zM11.500 12.500V18q0 4-4.500 4l-2-2q-3 0-3-3.500 0-4 4-4z" />
      </g>
    ),
  },
  {
    name: '浏览器',
    art: (
      <g fill="none" stroke="#e8e8e8">
        <path d="M5 13h14.500c0-10-14-10-14.500 0 0 8 11 9 14 3" strokeWidth="3.200" />
        <path d="M21 7c1-8-9-3-14 3S1 24 9 21" strokeWidth="1.300" />
      </g>
    ),
  },
  { name: '360', art: <path d="M20 6c-3 0-5-2-9-1C4 7 2 14 6 18c5 4 12 1 11-5-1-4-8-5-9 0 0 3 4 4 5 2M19 8c2 7-2 12-8 12M12 12h3" fill="none" stroke="#ddd" strokeWidth="1.200" /> },
  { name: 'Edge', art: <path d="M2 11C4 0 21-1 22 13H9c0 6 7 6 12 3v4C14 24 4 22 4 14c0-3 2-6 5-7-1 1-2 2-2 3h9c0-6-9-6-14 1z" fill="#0a78d4" /> },
  {
    name: 'Internet Explorer',
    art: (
      <g fill="none">
        <path d="M5 13h15c0-11-15-11-15 0 0 9 12 9 14 3" stroke="#4aa8e8" strokeWidth="3.800" />
        <path d="M22 6c1-7-10-2-15 4S1 25 8 22" stroke="#f4c838" strokeWidth="1.800" />
      </g>
    ),
  },
  {
    name: '文件资源管理器',
    art: (
      <>
        <path d="M1 4h8l2 2h11v15H1z" fill="#fbdc84" />
        <path d="M5 21v-8h14v8h-4v-4H9v4z" fill="#2ea1e6" />
        <path d="M3 5h5" stroke="#4ab068" strokeWidth="2" />
      </>
    ),
  },
  { name: '广联达', on: true, art: <path d="M23 2C20 5 17 1 11 1 4 2-1 7 1 14c2 7 9 10 15 8 5-2 8-8 5-13h-8c-4 0-5 4-3 6 1 2 4 2 5-1 1 4-3 6-6 4C5 16 5 10 9 7c4-3 12 1 14-5z" fill="#28a0ee" /> },
  {
    name: '360浏览器',
    on: true,
    art: (
      <g fill="none">
        <circle cx="12" cy="13" r="10" fill="#4cb82c" stroke="#d8f5c8" strokeWidth="1.500" />
        <path d="M7 13h10c0-7-10-7-10 0 0 5 7 6 9.500 2" stroke="#fff" strokeWidth="2.500" />
        <path d="M22 4C23 0 14 2 9 7S2 21 6 21" stroke="#8fd850" />
      </g>
    ),
  },
  { name: 'GGJ2013', on: true, art: <g transform="scale(1.5)">{shapes.logo}</g> },
  {
    name: '便签',
    on: true,
    art: (
      <>
        <rect x="0" y="0" width="24" height="24" rx="2" fill="#f5a623" />
        <path d="m3 5 12-2 3 15-12 3z" fill="#fff8e0" stroke="#b8802a" strokeWidth=".6" />
        <path d="m6 8 7-1M7 11l5-1M7 14l4-1" stroke="#8a6a3a" />
        <path d="m22 2-8 12-2 3 1-4 7-12z" fill="#6b3410" />
      </>
    ),
  },
];

const TaskBar = () => (
  <footer className="flex h-10 shrink-0 items-stretch bg-[#020b0e] text-white">
    <button type="button" aria-label="开始" className="flex w-12 shrink-0 items-center justify-center bg-black">
      <svg width="17" height="17" viewBox="0 0 17 17" fill="#fff"><path d="m0 2 7-1v7H0zM8 1l9-1v8H8zM0 9h7v7l-7-1zM8 9h9v8l-9-1z" /></svg>
    </button>
    <div className="flex w-[344px] shrink-0 items-center bg-[#333] pr-3 pl-[9px]">
      <span className="size-[21px] shrink-0 rounded-full border-3 border-[#f0f0f0]" />
      <input aria-label="搜索" placeholder="在这里输入你要搜索的内容" className="ml-[6px] min-w-0 flex-1 bg-transparent text-sm outline-none placeholder:text-[#9a9a9a]" />
      <Mic size={17} strokeWidth={1.5} className="text-[#aaa]" />
    </div>
    {[apps.slice(0, 4), apps.slice(4)].map((group, i) => (
      <div key={i} className="mr-1 flex shrink-0">
        {group.map((a) => (
          <button key={a.name} type="button" aria-label={a.name} className={`relative flex w-[49px] items-center justify-center border-x border-[#020b0e] ${a.name === 'GGJ2013' ? 'bg-[#33403f]' : ''}`}>
            <svg width="24" height="24" viewBox="0 0 24 24">{a.art}</svg>
            {a.on && <span className="absolute inset-x-1 bottom-0 h-0.5 bg-[#76b9ed]" />}
          </button>
        ))}
      </div>
    ))}
    <span className="ml-[10px] w-[43px] shrink-0 self-center whitespace-nowrap">链接</span>
    <div className="w-12 shrink-0 self-center text-center leading-[17px] whitespace-nowrap text-[#f09a24]">77%<br />CPU使用</div>
    <div className="ml-auto flex shrink-0 items-center gap-[9px]">
      <ChevronUp size={16} strokeWidth={1.5} />
      <svg width="17" height="12" viewBox="0 0 17 12" fill="none" stroke="#fff"><path d="M5.500 2.500h9v8h-7M15 5h1.500v3H15M1 0v2M5 0v2M.5 2.500h5v2l-2 1.500v3h3" /><path d="M8 5h5v3H8z" fill="#fff" /></svg>
      <svg width="14" height="14" viewBox="0 0 14 14" fill="none" stroke="#ddd" strokeWidth="1.200"><path d="M1 13A12 12 0 0 1 13 1M4 13a9 9 0 0 1 9-9M7 13a6 6 0 0 1 6-6M10 13a3 3 0 0 1 3-3" /></svg>
      <svg width="17" height="14" viewBox="0 0 17 14" fill="none" stroke="#fff"><path d="M.5 4.500h3L7 1v12L3.500 9.500h-3zM9 5q2 2 0 4M11 3q4 4 0 8M13 1q5 6 0 12" /></svg>
      <svg width="23" height="13" viewBox="0 0 23 13" fill="none" stroke="#fff"><path d="M.5.5h22v12H.5z" /><path d="M3 4h17M3 6.500h17" strokeDasharray="1.500 1" /><path d="M6 9.500h11" /></svg>
      <span className="mr-1 ml-0.5 text-[13px]">中</span>
      <Icon name="sogou" />
      <div className="ml-1 w-[66px] text-center leading-[19px] whitespace-nowrap">13:10<br />2018/4/26</div>
    </div>
    <div className="flex w-[57px] shrink-0 items-center border-r-4 border-[#1a1a1a] bg-black pl-[14px]">
      <svg width="26" height="26" viewBox="0 0 26 26">
        <path d="M2 2h16v12h-8l-3 4v-4H2z" fill="#fff" />
        <path d="M5 5.500h10M5 8h10M5 10.500h7" stroke="#000" />
        <circle cx="17.500" cy="17" r="8" fill="#222" stroke="#777" />
        <text x="15" y="21" fill="#fff" fontSize="11" fontFamily="Open Sans, sans-serif">1</text>
      </svg>
    </div>
  </footer>
);

export default function App() {
  return (
    <div className="flex h-screen flex-col overflow-hidden bg-[#f0f0f0] font-['Open_Sans','Noto_Sans_CJK_SC',sans-serif] text-xs text-black">
      <TitleBar />
      <MenuBar />
      <MainToolbar />
      <div className="flex min-h-0 flex-1">
        <Sidebar />
        <main className="ml-[3px] flex min-w-0 flex-1 flex-col">
          <MemberToolbar />
          <div className="flex min-h-0 flex-1 gap-[3px]">
            <MemberList />
            <section className="relative flex min-w-0 flex-1 flex-col bg-white">
              <div className="flex h-[22px] shrink-0 border-b border-[#d9d9d9]">
                <button type="button" className="-mb-px w-16 border-r border-[#d9d9d9] bg-white">属性编辑</button>
              </div>
              <div className="mt-[3px] mr-[5px] mb-1 ml-1 flex min-h-0 flex-1 justify-between border border-[#999] pt-px pr-px">
                <PropertyTable />
                <ScrollBar before="h-0" thumb="basis-[310px] shrink" after="flex-1" tone="bg-[#a6a6a6]" />
              </div>
              <SectionDialog />
            </section>
          </div>
        </main>
      </div>
      <StatusBar />
      <TaskBar />
    </div>
  );
}
